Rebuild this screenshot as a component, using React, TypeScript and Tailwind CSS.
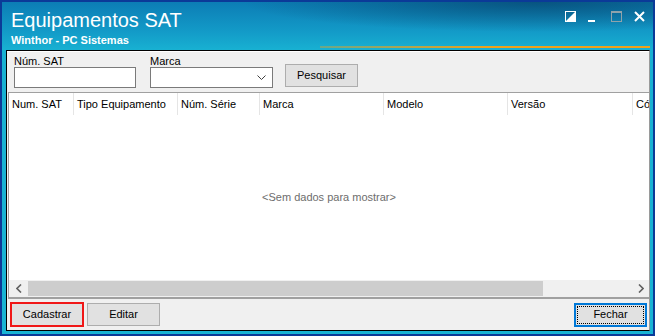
import React from "react";

const columns = [
  { label: "Num. SAT", width: 65 },
  { label: "Tipo Equipamento", width: 104 },
  { label: "Núm. Série", width: 82 },
  { label: "Marca", width: 124 },
  { label: "Modelo", width: 124 },
  { label: "Versão", width: 125 },
  { label: "Código", width: 80 },
];

const WindowControls = () => {
  return (
    <div className="flex items-start pt-[9px] pr-[5px]">
      {/* restore / dock */}
      <svg width="11" height="11" viewBox="0 0 11 11">
        <rect x="0.5" y="0.5" width="10" height="10" fill="none" stroke="#fff" />
        <polygon points="10,1 10,10 1,10" fill="#fff" />
      </svg>
      <svg className="ml-[12px]" width="7" height="11" viewBox="0 0 7 11">
        <rect x="0" y="9" width="7" height="2" fill="#fff" />
      </svg>
      <svg className="ml-[16px]" width="11" height="11" viewBox="0 0 11 11">
        <rect x="0.5" y="0.5" width="10" height="10" fill="none" stroke="#8fa3ab" />
        <rect x="0" y="0" width="11" height="2" fill="#8fa3ab" />
      </svg>
      <svg className="ml-[12px]" width="11" height="11" viewBox="0 0 11 11">
        <path d="M1 1 L10 10 M10 1 L1 10" stroke="#fff" strokeWidth="2" />
      </svg>
    </div>
  );
};

const Field = ({ label, width, select = false }: { label: string; width: number; select?: boolean }) => {
  return (
    <div className="flex flex-col">
      <span className="text-[11px] leading-[12px] text-black">{label}</span>
      <div
        className={`${width === 122 ? "w-[122px]" : "w-[123px]"} h-[21px] bg-white border border-[#7a7a7a] flex items-center justify-end pr-[6px]`}
      >
        {select && (
          <svg width="9" height="5" viewBox="0 0 9 5">
            <polyline points="0.5,0.5 4.5,4.5 8.5,0.5" fill="none" stroke="#404040" />
          </svg>
        )}
      </div>
    </div>
  );
};

const Button = ({ label, variant = "default" }: { label: string; variant?: "default" | "marked" | "focus" }) => {
  if (variant === "marked") {
    return (
      <div className="w-[74px] h-[25px] border-2 border-[#f01818] bg-[#e1e1e1] flex items-center justify-center text-[11px] text-black">
        {label}
      </div>
    );
  }
  if (variant === "focus") {
    return (
      <div className="w-[73px] h-[24px] border-2 border-[#0078d7] bg-[#e1e1e1] p-[1px]">
        <div className="w-full h-full border border-dotted border-black flex items-center justify-center text-[11px] text-black">
          {label}
        </div>
      </div>
    );
  }
  return (
    <div className="w-[73px] h-[23px] border border-[#adadad] bg-[#e1e1e1] flex items-center justify-center text-[11px] text-black">
      {label}
    </div>
  );
};

export default function App() {
  return (
    <div className="w-[655px] h-[336px] bg-[#0b3a98] p-[2px] font-['Liberation_Sans',Arial,sans-serif] overflow-hidden">
      <div className="h-full flex flex-col pl-[4px] pr-[3px] pb-[3px] bg-[radial-gradient(ellipse_45%_30px_at_82%_0px,rgba(6,70,110,0.75),transparent),linear-gradient(180deg,#0c7db5_0px,#139bc8_30px,#18b1d2_48px,#18b4d4_100%)]">
        {/* title bar */}
        <div className="relative h-[48px] flex justify-between shrink-0">
          <div className="pl-[5px] pt-[7px] text-white">
            <div className="text-[20px] leading-[23px]">Equipamentos SAT</div>
            <div className="mt-[2px] text-[11px] leading-[13px] font-bold">Winthor - PC Sistemas</div>
          </div>
          <WindowControls />
          <div className="absolute left-[314px] right-0 bottom-[2px] h-[2px] bg-gradient-to-r from-[#e8a020]/40 via-[#eea21a] to-[#eea21a]" />
        </div>

        {/* panel */}
        <div className="flex-1 flex flex-col border border-black border-r-[#9a9a9a] bg-[#f0f0f0] overflow-hidden">
          {/* filters */}
          <div className="h-[41px] shrink-0 flex items-start border-t border-white pl-[7px] pt-[3px]">
            <Field label="Núm. SAT" width={122} />
            <div className="ml-[14px]">
              <Field label="Marca" width={123} select />
            </div>
            <div className="ml-[12px] mt-[9px]">
              <Button label="Pesquisar" />
            </div>
          </div>

          {/* grid */}
          <div className="flex-1 flex flex-col ml-[1px] border-t border-l border-[#a0a0a0] border-b-2 border-b-[#a0a0a0] bg-white">
            <div className="h-[22px] shrink-0 flex">
              {columns.map((c, i) => (
                <div
                  key={c.label}
                  className={`shrink-0 flex items-center pl-[3px] text-[11px] leading-[13px] text-black whitespace-nowrap border-r border-[#e5e5e5] ${
                    ["w-[65px]", "w-[104px]", "w-[82px]", "w-[124px]", "w-[124px]", "w-[125px]", "w-[80px]"][i]
                  }`}
                >
                  {c.label}
                </div>
              ))}
            </div>
            <div className="flex-1 flex items-center justify-center text-[11px] text-[#6d6d6d]">
              &lt;Sem dados para mostrar&gt;
            </div>
            {/* horizontal scrollbar */}
            <div className="h-[17px] shrink-0 flex bg-[#f0f0f0]">
              <div className="w-[19px] flex items-center justify-center">
                <svg width="6" height="9" viewBox="0 0 6 9">
                  <polyline points="5,0.5 1,4.5 5,8.5" fill="none" stroke="#606060" strokeWidth="1.6" />
                </svg>
              </div>
              <div className="w-[515px] bg-[#cdcdcd] my-[1px]" />
              <div className="flex-1 flex items-center justify-end pr-[5px]">
                <svg width="6" height="9" viewBox="0 0 6 9">
                  <polyline points="1,0.5 5,4.5 1,8.5" fill="none" stroke="#606060" strokeWidth="1.6" />
                </svg>
              </div>
            </div>
          </div>

          {/* buttons */}
          <div className="h-[31px] shrink-0 flex items-center pl-[3px] pr-[2px]">
            <Button label="Cadastrar" variant="marked" />
            <div className="ml-[3px]">
              <Button label="Editar" />
            </div>
            <div className="ml-auto">
              <Button label="Fechar" variant="focus" />
            </div>
          </div>
        </div>
      </div>
    </div>
  );
}
